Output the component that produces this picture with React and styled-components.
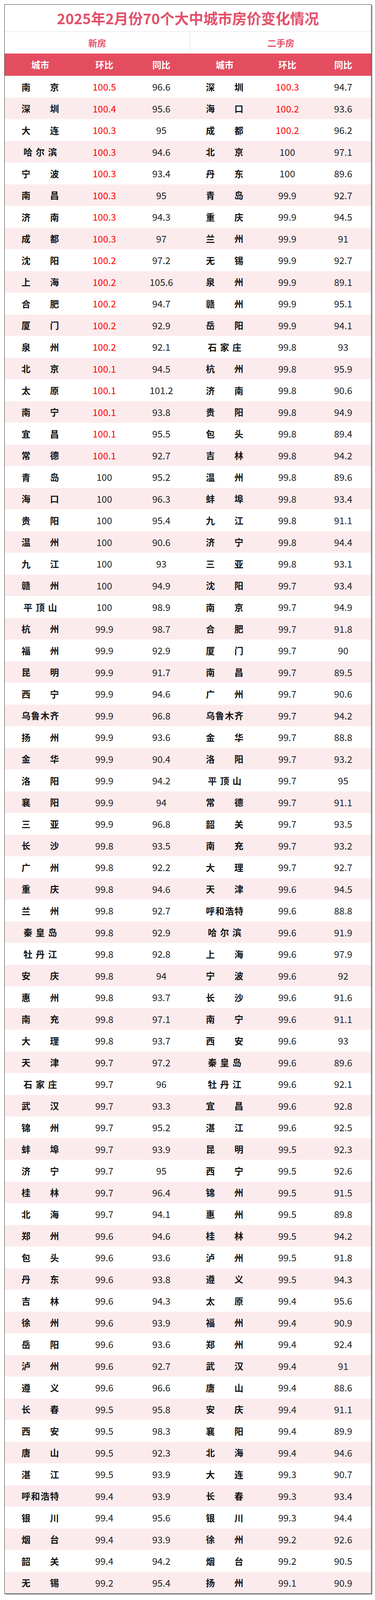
import React from "react";
import styled, { createGlobalStyle } from "styled-components";

const GlobalStyle = createGlobalStyle`
  html, body {
    margin: 0;
    padding: 0;
    background: #ffffff;
  }
  body {
    font-family: "Microsoft YaHei", "Noto Sans CJK SC", "Noto Sans", sans-serif;
    color: #1a1a1a;
  }
`;

const COLS = "182px 146px 146px 178px 143px 143px";
const ACCENT = "#e34d5f";
const CITY_FONT = 23;

// 城市 环比 同比 — 新房
const newHomes = `
南京 100.5 96.6|深圳 100.4 95.6|大连 100.3 95|哈尔滨 100.3 94.6|宁波 100.3 93.4|
南昌 100.3 95|济南 100.3 94.3|成都 100.3 97|沈阳 100.2 97.2|上海 100.2 105.6|
合肥 100.2 94.7|厦门 100.2 92.9|泉州 100.2 92.1|北京 100.1 94.5|太原 100.1 101.2|
南宁 100.1 93.8|宜昌 100.1 95.5|常德 100.1 92.7|青岛 100 95.2|海口 100 96.3|
贵阳 100 95.4|温州 100 90.6|九江 100 93|赣州 100 94.9|平顶山 100 98.9|
杭州 99.9 98.7|福州 99.9 92.9|昆明 99.9 91.7|西宁 99.9 94.6|乌鲁木齐 99.9 96.8|
扬州 99.9 93.6|金华 99.9 90.4|洛阳 99.9 94.2|襄阳 99.9 94|三亚 99.9 96.8|
长沙 99.8 93.5|广州 99.8 92.2|重庆 99.8 94.6|兰州 99.8 92.7|秦皇岛 99.8 92.9|
牡丹江 99.8 92.8|安庆 99.8 94|惠州 99.8 93.7|南充 99.8 97.1|大理 99.8 93.7|
天津 99.7 97.2|石家庄 99.7 96|武汉 99.7 93.3|锦州 99.7 95.2|蚌埠 99.7 93.9|
济宁 99.7 95|桂林 99.7 96.4|北海 99.7 94.1|郑州 99.6 94.6|包头 99.6 93.6|
丹东 99.6 93.8|吉林 99.6 94.3|徐州 99.6 93.9|岳阳 99.6 93.6|泸州 99.6 92.7|
遵义 99.6 96.6|长春 99.5 95.8|西安 99.5 98.3|唐山 99.5 92.3|湛江 99.5 93.9|
呼和浩特 99.4 93.9|银川 99.4 95.6|烟台 99.4 93.9|韶关 99.4 94.2|无锡 99.2 95.4`;

// 城市 环比 同比 — 二手房
const resaleHomes = `
深圳 100.3 94.7|海口 100.2 93.6|成都 100.2 96.2|北京 100 97.1|丹东 100 89.6|
青岛 99.9 92.7|重庆 99.9 94.5|兰州 99.9 91|无锡 99.9 92.7|泉州 99.9 89.1|
赣州 99.9 95.1|岳阳 99.9 94.1|石家庄 99.8 93|杭州 99.8 95.9|济南 99.8 90.6|
贵阳 99.8 94.9|包头 99.8 89.4|吉林 99.8 94.2|温州 99.8 89.6|蚌埠 99.8 93.4|
九江 99.8 91.1|济宁 99.8 94.4|三亚 99.8 93.1|沈阳 99.7 93.4|南京 99.7 94.9|
合肥 99.7 91.8|厦门 99.7 90|南昌 99.7 89.5|广州 99.7 90.6|乌鲁木齐 99.7 94.2|
金华 99.7 88.8|洛阳 99.7 93.2|平顶山 99.7 95|常德 99.7 91.1|韶关 99.7 93.5|
南充 99.7 93.2|大理 99.7 92.7|天津 99.6 94.5|呼和浩特 99.6 88.8|哈尔滨 99.6 91.9|
上海 99.6 97.9|宁波 99.6 92|长沙 99.6 91.6|南宁 99.6 91.1|西安 99.6 93|
秦皇岛 99.6 89.6|牡丹江 99.6 92.1|宜昌 99.6 92.8|湛江 99.6 92.5|昆明 99.5 92.3|
西宁 99.5 92.6|锦州 99.5 91.5|惠州 99.5 89.8|桂林 99.5 94.2|泸州 99.5 91.8|
遵义 99.5 94.3|太原 99.4 95.6|福州 99.4 90.9|郑州 99.4 92.4|武汉 99.4 91|
唐山 99.4 88.6|安庆 99.4 91.1|襄阳 99.4 89.9|北海 99.4 94.6|大连 99.3 90.7|
长春 99.3 93.4|银川 99.3 94.4|徐州 99.2 92.6|烟台 99.2 90.5|扬州 99.1 90.9`;

const parse = (text) =>
  text
    .split("|")
    .map((s) => s.trim())
    .filter(Boolean)
    .map((s) => {
      const [city, mom, yoy] = s.split(/\s+/);
      return { city, mom, yoy };
    });

const left = parse(newHomes);
const right = parse(resaleHomes);

// names are spread over a fixed span: 2 and 4 chars fill 96px, 3 chars 86px
const citySpacing = (len) => {
  const span = len === 3 ? 86 : 96;
  return len > 1 ? (span - len * CITY_FONT) / (len - 1) : 0;
};

const Page = styled.div`
  padding: 11px 0 12px 11px;
`;

const Sheet = styled.div`
  width: 938px;
  border: 1px solid #3a3a3a;
  box-shadow: 2px 2px 2px rgba(0, 0, 0, 0.45);
  background: #fff;
`;

const TitleBar = styled.div`
  height: 68px;
  display: flex;
  align-items: center;
  justify-content: center;
  border-bottom: 2px solid #ececec;
  color: #e2506a;
  font-size: 37px;
  font-weight: 700;
`;

const GroupRow = styled.div`
  display: grid;
  grid-template-columns: 474px 464px;
  height: 54.7px;
`;

const GroupCell = styled.div`
  display: flex;
  align-items: center;
  justify-content: center;
  color: #e2506a;
  font-size: 23px;
  font-weight: 700;
  border-left: ${(p) => (p.$divider ? "2px solid #ececec" : "none")};
`;

const HeaderRow = styled.div`
  display: grid;
  grid-template-columns: ${COLS};
  height: 57.4px;
  background: ${ACCENT};
`;

const HeadCell = styled.div`
  display: flex;
  align-items: center;
  justify-content: center;
  color: #fff;
  font-size: 23px;
  font-weight: 700;
`;

const Row = styled.div`
  display: grid;
  grid-template-columns: ${COLS};
  height: 55.5px;
  background: ${(p) => (p.$striped ? "#fcebed" : "#ffffff")};
`;

const CityCell = styled.div`
  display: flex;
  align-items: center;
  justify-content: center;
  font-size: ${CITY_FONT}px;
  font-weight: 700;
  color: #141414;
`;

const CityName = styled.span`
  white-space: nowrap;
  letter-spacing: ${(p) => p.$gap}px;
  margin-right: -${(p) => p.$gap}px;
`;

const NumCell = styled.div`
  display: flex;
  align-items: center;
  justify-content: center;
  font-size: 24px;
  color: ${(p) => (p.$up ? "#ff0000" : "#222222")};
`;

const Cells = ({ item }) => (
  <>
    <CityCell>
      <CityName $gap={citySpacing(item.city.length)}>{item.city}</CityName>
    </CityCell>
    <NumCell $up={parseFloat(item.mom) > 100}>{item.mom}</NumCell>
    <NumCell>{item.yoy}</NumCell>
  </>
);

const headings = ["城市", "环比", "同比", "城市", "环比", "同比"];

export default function App() {
  return (
    <>
      <GlobalStyle />
      <Page>
        <Sheet>
          <TitleBar>2025年2月份70个大中城市房价变化情况</TitleBar>
          <GroupRow>
            <GroupCell>新房</GroupCell>
            <GroupCell $divider>二手房</GroupCell>
          </GroupRow>
          <HeaderRow>
            {headings.map((h, i) => (
              <HeadCell key={i}>{h}</HeadCell>
            ))}
          </HeaderRow>
          {left.map((item, i) => (
            <Row key={i} $striped={i % 2 === 1}>
              <Cells item={item} />
              <Cells item={right[i]} />
            </Row>
          ))}
        </Sheet>
      </Page>
    </>
  );
}
